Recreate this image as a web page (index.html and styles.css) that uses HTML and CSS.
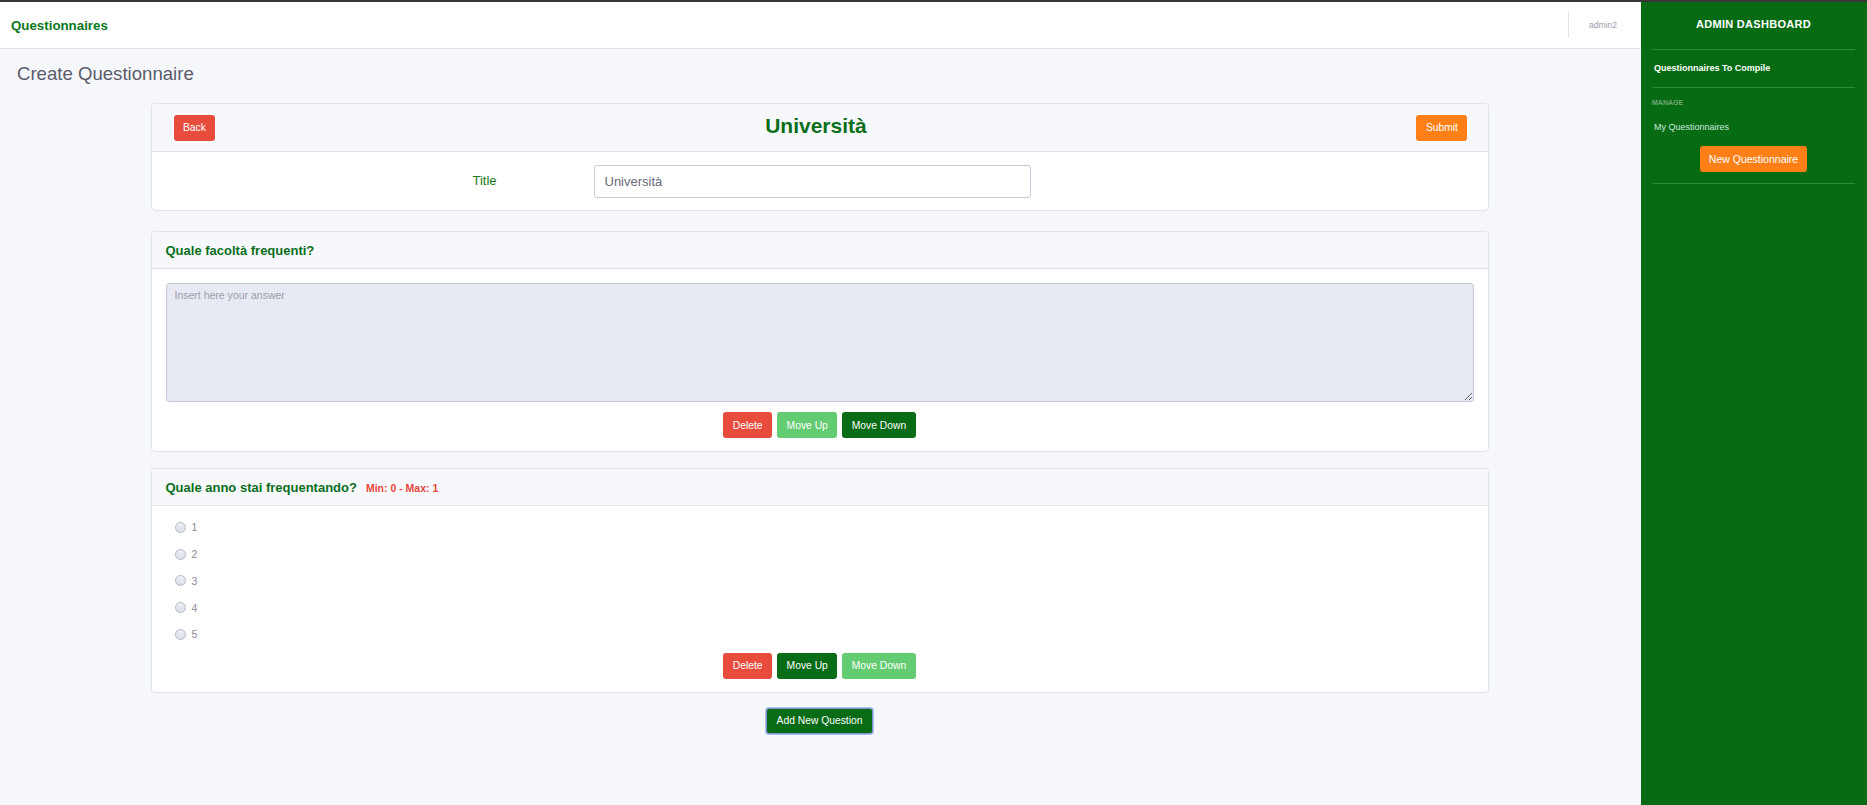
FILE: index.html
```html
<!DOCTYPE html>
<html lang="it">
<head>
<meta charset="utf-8">
<title>Create Questionnaire</title>
<link rel="stylesheet" href="styles.css">
</head>
<body>
<div class="topline"></div>
<div class="layout">
  <div class="main">
    <header class="navbar">
      <div class="brand">Questionnaires</div>
      <div class="user">admin2</div>
    </header>
    <div class="content">
      <h1 class="page-title">Create Questionnaire</h1>
      <div class="container">
        <section class="card card-first">
          <div class="card-header head-main">
            <button class="btn btn-red">Back</button>
            <h2 class="q-name">Università</h2>
            <button class="btn btn-orange">Submit</button>
          </div>
          <div class="card-body title-row">
            <label class="title-label">Title</label>
            <input class="title-input" type="text" value="Università">
          </div>
        </section>

        <section class="card card-mid">
          <div class="card-header head-q">
            <h3 class="q-title">Quale facoltà frequenti?</h3>
          </div>
          <div class="card-body q-body">
            <textarea class="answer" placeholder="Insert here your answer"></textarea>
            <div class="actions">
              <button class="btn btn-red">Delete</button>
              <button class="btn btn-light">Move Up</button>
              <button class="btn btn-dark">Move Down</button>
            </div>
          </div>
        </section>

        <section class="card card-last">
          <div class="card-header head-q">
            <h3 class="q-title">Quale anno stai frequentando?</h3>
            <span class="minmax">Min: 0 - Max: 1</span>
          </div>
          <div class="card-body q-body">
            <ul class="options">
              <li><span class="radio"></span><span class="opt">1</span></li>
              <li><span class="radio"></span><span class="opt">2</span></li>
              <li><span class="radio"></span><span class="opt">3</span></li>
              <li><span class="radio"></span><span class="opt">4</span></li>
              <li><span class="radio"></span><span class="opt">5</span></li>
            </ul>
            <div class="actions">
              <button class="btn btn-red">Delete</button>
              <button class="btn btn-dark">Move Up</button>
              <button class="btn btn-light">Move Down</button>
            </div>
          </div>
        </section>

        <div class="add-row">
          <button class="btn btn-dark btn-focus">Add New Question</button>
        </div>
      </div>
    </div>
  </div>
  <aside class="sidebar">
    <div class="side-title">ADMIN DASHBOARD</div>
    <div class="side-sep"></div>
    <div class="side-link strong">Questionnaires To Compile</div>
    <div class="side-sep"></div>
    <div class="side-label">MANAGE</div>
    <div class="side-link">My Questionnaires</div>
    <div class="side-btn-row"><button class="btn btn-orange side-btn">New Questionnaire</button></div>
    <div class="side-sep"></div>
  </aside>
</div>
</body>
</html>
```
FILE: styles.css
```css
* { box-sizing: border-box; }
html, body { margin: 0; padding: 0; height: 100%; }
body {
  font-family: "Liberation Sans", Arial, sans-serif;
  background: #f6f7fb;
  color: #333;
  overflow: hidden;
}
.topline { height: 2px; background: #383838; }
.layout { display: flex; height: 803px; }
.main { flex: 1; display: flex; flex-direction: column; min-width: 0; }

.navbar {
  height: 47px;
  flex: none;
  background: #fff;
  border-bottom: 1px solid #dfe0ee;
  display: flex;
  align-items: center;
  justify-content: space-between;
  padding: 0 24px 0 11px;
}
.brand { color: #0b771d; font-weight: bold; font-size: 13.3px; }
.user {
  font-size: 8.5px;
  color: #9c9cab;
  border-left: 1px solid #e2e3ea;
  height: 26px;
  line-height: 26px;
  padding-left: 20px;
}

.page-title {
  margin: 0;
  font-weight: normal;
  font-size: 18.6px;
  color: #5b5b6c;
  padding: 14px 0 0 17px;
  height: 54px;
}
.container { width: 1338px; margin: 0 auto; position: relative; left: -1px; }

.card {
  background: #fff;
  border: 1px solid #dfe1ec;
  border-radius: 4px;
  overflow: hidden;
}
.card-first { margin-bottom: 20px; }
.card-mid { margin-bottom: 16px; }
.card-last { margin-bottom: 13px; }
.card-header {
  background: #f7f8fc;
  border-bottom: 1px solid #dfe1ec;
}
.head-main {
  height: 48px;
  display: flex;
  align-items: center;
  justify-content: space-between;
  padding: 0 20px 0 22px;
}
.q-name {
  margin: 0;
  font-size: 21px;
  font-weight: bold;
  color: #0b6e1b;
  position: relative;
  top: -2px;
}
.head-q {
  height: 37px;
  display: flex;
  align-items: center;
  padding: 0 14px;
}
.q-title { margin: 0; font-size: 13px; font-weight: bold; color: #0b6e1b; }
.minmax { margin-left: 9px; font-size: 10.5px; font-weight: bold; color: #e8473a; position: relative; top: 1px; }

.title-row {
  display: grid;
  grid-template-columns: 321px 121px 437px;
  align-items: center;
  padding: 13px 0 12px 0;
}
.title-label { grid-column: 2; color: #187a16; font-size: 13px; position: relative; top: -1px; }
.title-input {
  grid-column: 3;
  height: 33px;
  border: 1px solid #c9cbd9;
  border-radius: 3px;
  padding: 0 10px;
  font-family: inherit;
  font-size: 13px;
  color: #6a6a7a;
  background: #fff;
}

.q-body { padding: 14px 14px 13px 14px; }
.answer {
  display: block;
  width: 100%;
  height: 119px;
  background: #e8eaf3;
  border: 1px solid #c8cad9;
  border-radius: 3px;
  padding: 5px 8px;
  font-family: inherit;
  font-size: 10.5px;
  resize: vertical;
}
.answer::placeholder { color: #9b9cab; }

.actions {
  display: flex;
  justify-content: center;
  gap: 5px;
  margin-top: 10px;
}
.btn {
  height: 26px;
  border: none;
  border-radius: 3px;
  padding: 0 9.5px;
  font-family: "Liberation Sans", Arial, sans-serif;
  font-size: 10.3px;
  color: #fff;
  cursor: pointer;
}
.btn-red { background: #e84c3d; }
.btn-orange { background: #fd7f16; }
.btn-light { background: #63cb71; }
.btn-dark { background: #086b15; }

.options { list-style: none; margin: -6px 0 0 0; padding: 0 0 0 9px; }
.options li {
  display: flex;
  align-items: center;
  height: 26.75px;
  font-size: 10.5px;
  color: #8a8a98;
}
.radio {
  width: 11px;
  height: 11px;
  border-radius: 50%;
  border: 1px solid #b3b6c9;
  background: linear-gradient(#eef0f6, #dcdee8);
  margin-right: 6px;
}
.options + .actions { margin-top: 5px; }

.add-row { display: flex; justify-content: center; }
.btn-focus {
  height: 26px;
  padding: 0 10px;
  box-shadow: 0 0 0 1px #b2c0ee;
  border: 1px solid #7d95d0;
  margin-top: 2px;
}

.sidebar {
  width: 226px;
  flex: none;
  background: #076b14;
  padding: 0 12px 0 11px;
}
.side-title {
  text-align: center;
  color: #fff;
  font-weight: bold;
  font-size: 11px;
  letter-spacing: 0.3px;
  height: 47px;
  line-height: 45px;
}
.side-sep { height: 1px; background: #2c8a37; }
.side-link {
  color: #cfe8dc;
  font-size: 9px;
  padding-left: 2px;
  line-height: 10px;
  margin-top: 15px;
}
.side-link.strong {
  color: #fff;
  font-weight: bold;
  font-size: 9px;
  height: 37px;
  line-height: 37px;
  margin-top: 0;
}
.side-label {
  color: #70a878;
  font-weight: bold;
  font-size: 7px;
  margin-top: 11px;
  line-height: 8px;
  height: 8px;
}
.side-btn-row { display: flex; justify-content: center; padding: 14px 0 11px 0; }
.side-btn { height: 26px; font-size: 10.5px; padding: 0 9px; }
```
